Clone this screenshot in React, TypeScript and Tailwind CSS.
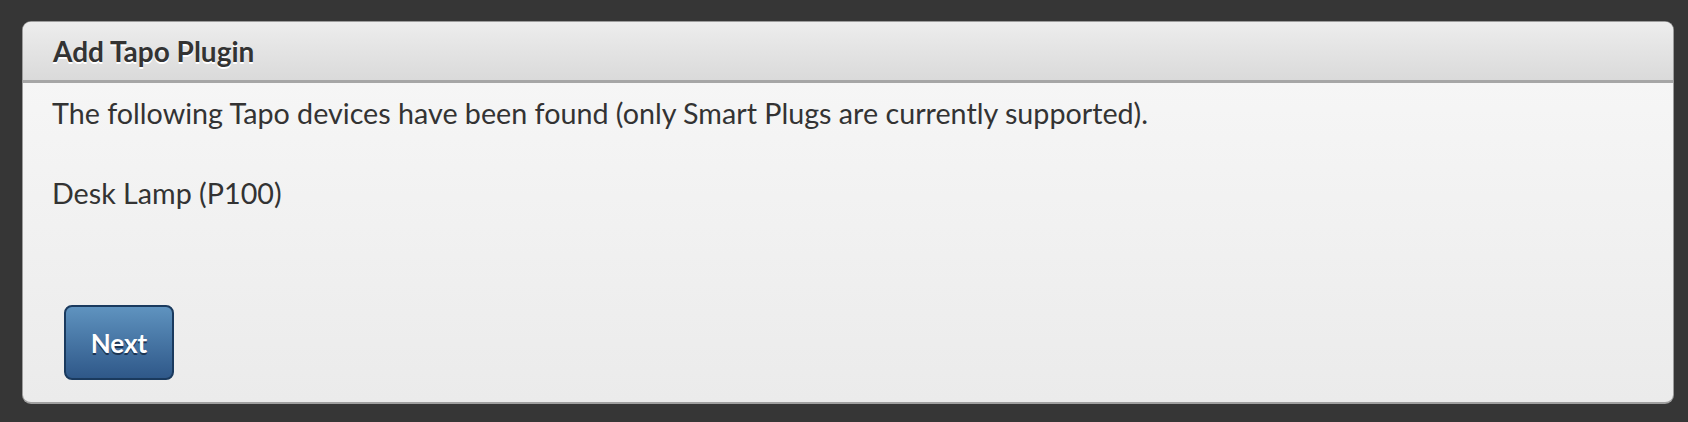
import React from "react";

export default function App() {
  return (
    <div
      className="w-full h-[422px] bg-[#363636] pt-[21px] pl-[22px] pr-[14px] pb-[18px]"
      style={{ fontFamily: "Lato, 'Open Sans', sans-serif" }}
    >
      <div className="h-full flex flex-col rounded-[9px] border border-[#9c9c9c] border-b-2 border-b-[#a0a0a0] overflow-hidden bg-gradient-to-b from-[#f8f8f8] to-[#ebebeb]">
        <div className="h-[61px] shrink-0 flex items-center px-[30px] bg-gradient-to-b from-[#ededed] to-[#dadada] border-b-[3px] border-[#a6a6a6]">
          <h1 className="text-[28px] font-bold text-[#333333] [text-shadow:0_2px_0_#ffffff]">
            Add Tapo Plugin
          </h1>
        </div>
        <div className="flex-1 px-[29px] pt-[10px] text-[28.7px] leading-[40px] text-[#333333]">
          <p>The following Tapo devices have been found (only Smart Plugs are currently supported).</p>
          <p>&nbsp;</p>
          <p>Desk Lamp (P100)</p>
          <button className="mt-[92px] ml-[12px] w-[110px] h-[75px] rounded-[8px] border-2 border-[#1a3a5e] bg-gradient-to-b from-[#5f93bf] to-[#2f5889] text-white text-[26px] font-bold [text-shadow:0_2px_0_#1d3553] flex items-center justify-center leading-none">
            Next
          </button>
        </div>
      </div>
    </div>
  );
}
